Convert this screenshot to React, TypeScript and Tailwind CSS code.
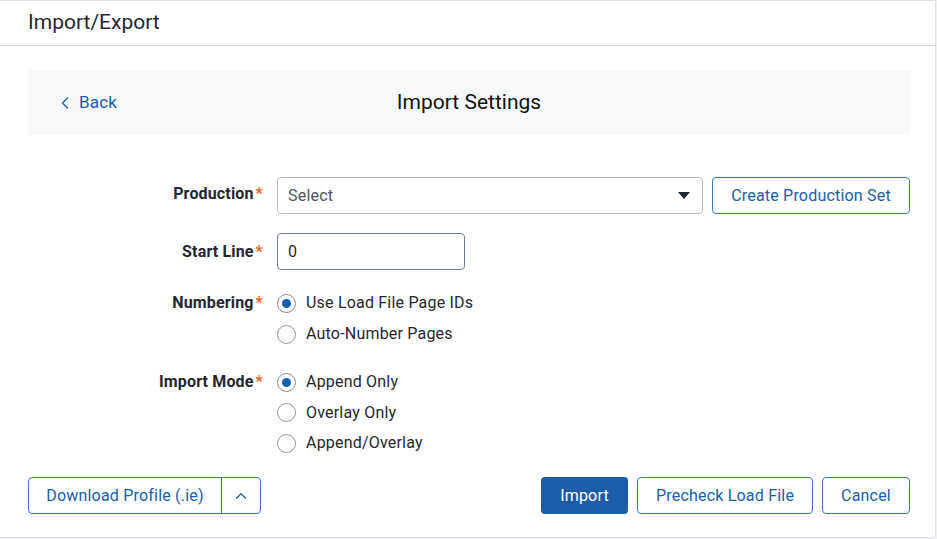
import React, { useState } from 'react';
import { ChevronLeft, ChevronUp } from 'lucide-react';

const Label = ({ text }: { text: string }) => (
  <div className="text-right text-[16px] font-bold text-[#1f2733] leading-[20px] tracking-[0.15px]">
    {text}
    <span className="text-[#e8661a] ml-[2px]">*</span>
  </div>
);

const Radio = ({ label, checked, onClick }: { label: string; checked: boolean; onClick: () => void }) => (
  <button onClick={onClick} className="flex items-center h-[20px] text-left">
    <span className={`w-[19px] h-[19px] rounded-full border-[1.5px] flex items-center justify-center bg-white ${checked ? 'border-[#7e8fa6]' : 'border-[#8d97a5]'}`}>
      {checked && <span className="w-[9px] h-[9px] rounded-full bg-[#1a5ea9]" />}
    </span>
    <span className="ml-[10px] text-[16px] text-[#1f2733] tracking-[0.2px]">{label}</span>
  </button>
);

export default function App() {
  const [numbering, setNumbering] = useState('load');
  const [mode, setMode] = useState('append');

  return (
    <div className="w-[937px] h-[539px] bg-[#eef0f2] overflow-hidden" style={{ fontFamily: 'Roboto, "Liberation Sans", sans-serif' }}>
      <div className="w-[936px] h-[538px] bg-white border-t border-r border-b border-[#dcdfe3] rounded-br-[4px] flex flex-col">
        {/* header */}
        <div className="h-[45px] border-b border-[#d3dce8] flex items-center pl-[28px]">
          <h1 className="text-[21px] text-[#1f2733] leading-none -mt-[1px]">Import/Export</h1>
        </div>

        <div className="pl-[28px] pr-[25px] pt-[24px] flex-1 flex flex-col">
          {/* settings bar */}
          <div className="h-[65px] bg-[#f8f9fb] flex items-center relative">
            <button className="flex items-center text-[#1a5ea9] text-[17px] ml-[27px] tracking-[0.2px]">
              <ChevronLeft className="w-[20px] h-[20px] mr-[4px]" strokeWidth={1.5} />
              Back
            </button>
            <div className="absolute left-0 right-0 text-center text-[21px] text-[#111] pointer-events-none">Import Settings</div>
          </div>

          {/* form */}
          <div className="grid grid-cols-[235px_1fr] gap-x-[14px] mt-[42px]">
            <div className="pt-[7px]"><Label text="Production" /></div>
            <div className="flex">
              <div className="w-[426px] h-[37px] border border-[#b9bfc8] rounded-[4px] flex items-center justify-between pl-[10px] pr-[12px]">
                <span className="text-[16px] text-[#4a5566] tracking-[0.2px]">Select</span>
                <svg width="12" height="7" viewBox="0 0 12 7"><path d="M0 0h12L6 7z" fill="#1f2733" /></svg>
              </div>
              <button className="ml-[9px] w-[198px] h-[37px] border border-[#3b75ba] rounded-[4px] text-[16px] text-[#1a5ea9] tracking-[0.2px]">Create Production Set</button>
            </div>

            <div className="pt-[9px] mt-[19px]"><Label text="Start Line" /></div>
            <div className="mt-[19px]">
              <div className="w-[188px] h-[37px] border border-[#6f7e93] rounded-[4px] flex items-center pl-[10px] text-[16px] text-[#1f2733]">0</div>
            </div>

            <div className="mt-[23px]"><Label text="Numbering" /></div>
            <div className="mt-[23px] flex flex-col gap-[11px]">
              <Radio label="Use Load File Page IDs" checked={numbering === 'load'} onClick={() => setNumbering('load')} />
              <Radio label="Auto-Number Pages" checked={numbering === 'auto'} onClick={() => setNumbering('auto')} />
            </div>

            <div className="mt-[28px]"><Label text="Import Mode" /></div>
            <div className="mt-[28px] flex flex-col gap-[10.5px]">
              <Radio label="Append Only" checked={mode === 'append'} onClick={() => setMode('append')} />
              <Radio label="Overlay Only" checked={mode === 'overlay'} onClick={() => setMode('overlay')} />
              <Radio label="Append/Overlay" checked={mode === 'both'} onClick={() => setMode('both')} />
            </div>
          </div>

          {/* footer */}
          <div className="flex items-center mt-[24px]">
            <div className="flex h-[37px] border border-[#3b75ba] rounded-[4px] text-[#1a5ea9]">
              <button className="w-[193px] text-[16px] border-r border-[#3b75ba] tracking-[0.2px]">Download Profile (.ie)</button>
              <button className="w-[38px] flex items-center justify-center">
                <ChevronUp className="w-[18px] h-[18px]" strokeWidth={1.6} />
              </button>
            </div>
            <div className="flex-1" />
            <button className="w-[87px] h-[37px] bg-[#1a5ea9] rounded-[4px] text-white text-[16px] tracking-[0.2px]">Import</button>
            <button className="ml-[9px] w-[176px] h-[37px] border border-[#3b75ba] rounded-[4px] text-[#1a5ea9] text-[16px] tracking-[0.2px]">Precheck Load File</button>
            <button className="ml-[9px] w-[88px] h-[37px] border border-[#3b75ba] rounded-[4px] text-[#1a5ea9] text-[16px] tracking-[0.2px]">Cancel</button>
          </div>
        </div>
      </div>
    </div>
  );
}
